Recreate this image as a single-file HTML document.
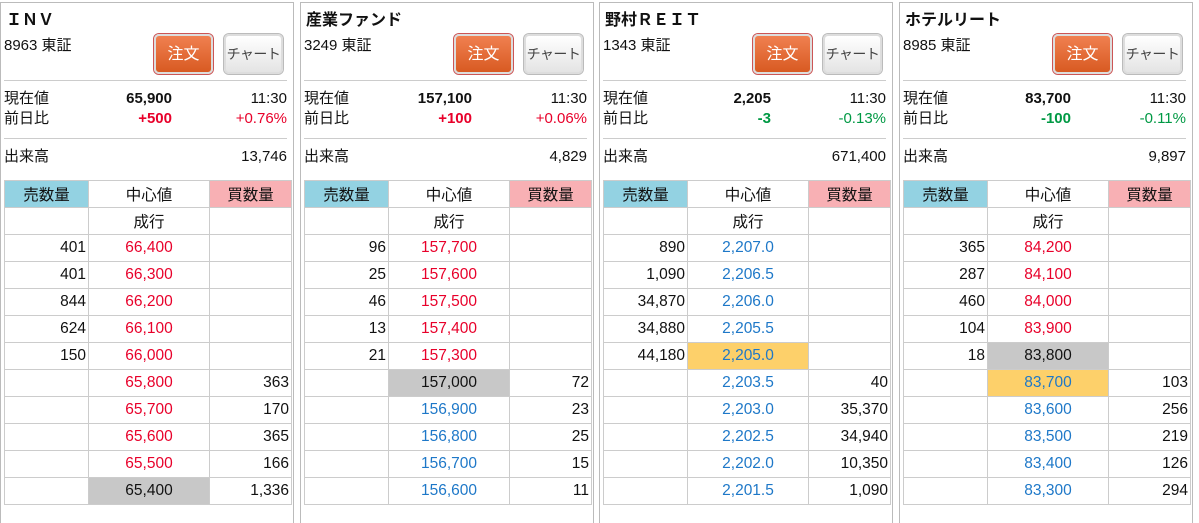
<!DOCTYPE html><html><head><meta charset="utf-8"><style>
body{margin:0;width:1199px;height:508px;overflow:hidden;background:#fff;font-family:"Liberation Sans","Noto Sans CJK JP",sans-serif;font-size:15px;color:#111}
.p{position:absolute;top:2px;width:292px;height:520px;border:1px solid #bbb;border-bottom:none}
.a{position:absolute;white-space:nowrap;line-height:20px}
.t{left:5px;top:8px;font-weight:bold;font-size:16px}
.btn{position:absolute;top:31px;width:59px;height:40px;border-radius:5px;box-sizing:border-box;text-align:center;line-height:37px;font-size:16px}
.o{left:153px;background:linear-gradient(#f08050,#d85a22);color:#fff;border:2px solid #ddd;box-shadow:0 0 0 1px #c55}
.g{left:223px;background:linear-gradient(#fff,#e4e4e4);color:#444;border:2px solid #ddd;box-shadow:0 0 0 1px #bbb;font-size:14px;letter-spacing:-0.5px}
.hr{position:absolute;left:3px;width:283px;height:1px;background:#ccc}
table{position:absolute;left:3px;top:177px;border-collapse:collapse;width:288px}
td{border:1px solid #ccc;height:26px;padding:0 2px;text-align:right;font-size:15.5px}
td.c{text-align:center;width:116px}
td.l{width:79px}
.r{color:#e8002a}.b{color:#1e78c8}.gr{color:#009944}
.hs{background:#93d2e2;text-align:center}.hb{background:#f8b0b4;text-align:center}
.gy{background:#c8c8c8}.yl{background:#fdd06a}
.l1{top:86px}.l2{top:106px}.l3{top:144px}
.v{right:121px;font-weight:bold}.tm{right:6px}.lb{left:3px}
</style></head><body>

<div class="p" style="left:0">
<div class="a t">ＩＮＶ</div><div class="a lb" style="top:33px">8963 東証</div>
<div class="btn o">注文</div><div class="btn g">チャート</div>
<div class="hr" style="top:77px"></div>
<div class="a lb l1">現在値</div><div class="a v l1">65,900</div><div class="a tm l1">11:30</div>
<div class="a lb l2">前日比</div><div class="a v r l2">+500</div><div class="a tm r l2">+0.76%</div>
<div class="hr" style="top:135px"></div>
<div class="a lb l3">出来高</div><div class="a tm l3">13,746</div>
<table>
<tr><td class="hs l">売数量</td><td class="c">中心値</td><td class="hb">買数量</td></tr>
<tr><td></td><td class="c">成行</td><td></td></tr>
<tr><td>401</td><td class="c r">66,400</td><td></td></tr>
<tr><td>401</td><td class="c r">66,300</td><td></td></tr>
<tr><td>844</td><td class="c r">66,200</td><td></td></tr>
<tr><td>624</td><td class="c r">66,100</td><td></td></tr>
<tr><td>150</td><td class="c r">66,000</td><td></td></tr>
<tr><td></td><td class="c r">65,800</td><td>363</td></tr>
<tr><td></td><td class="c r">65,700</td><td>170</td></tr>
<tr><td></td><td class="c r">65,600</td><td>365</td></tr>
<tr><td></td><td class="c r">65,500</td><td>166</td></tr>
<tr><td></td><td class="c gy">65,400</td><td>1,336</td></tr>
</table></div>

<div class="p" style="left:300px">
<div class="a t">産業ファンド</div><div class="a lb" style="top:33px">3249 東証</div>
<div class="btn o">注文</div><div class="btn g">チャート</div>
<div class="hr" style="top:77px"></div>
<div class="a lb l1">現在値</div><div class="a v l1">157,100</div><div class="a tm l1">11:30</div>
<div class="a lb l2">前日比</div><div class="a v r l2">+100</div><div class="a tm r l2">+0.06%</div>
<div class="hr" style="top:135px"></div>
<div class="a lb l3">出来高</div><div class="a tm l3">4,829</div>
<table>
<tr><td class="hs l">売数量</td><td class="c">中心値</td><td class="hb">買数量</td></tr>
<tr><td></td><td class="c">成行</td><td></td></tr>
<tr><td>96</td><td class="c r">157,700</td><td></td></tr>
<tr><td>25</td><td class="c r">157,600</td><td></td></tr>
<tr><td>46</td><td class="c r">157,500</td><td></td></tr>
<tr><td>13</td><td class="c r">157,400</td><td></td></tr>
<tr><td>21</td><td class="c r">157,300</td><td></td></tr>
<tr><td></td><td class="c gy">157,000</td><td>72</td></tr>
<tr><td></td><td class="c b">156,900</td><td>23</td></tr>
<tr><td></td><td class="c b">156,800</td><td>25</td></tr>
<tr><td></td><td class="c b">156,700</td><td>15</td></tr>
<tr><td></td><td class="c b">156,600</td><td>11</td></tr>
</table></div>

<div class="p" style="left:599px">
<div class="a t">野村ＲＥＩＴ</div><div class="a lb" style="top:33px">1343 東証</div>
<div class="btn o">注文</div><div class="btn g">チャート</div>
<div class="hr" style="top:77px"></div>
<div class="a lb l1">現在値</div><div class="a v l1">2,205</div><div class="a tm l1">11:30</div>
<div class="a lb l2">前日比</div><div class="a v gr l2">-3</div><div class="a tm gr l2">-0.13%</div>
<div class="hr" style="top:135px"></div>
<div class="a lb l3">出来高</div><div class="a tm l3">671,400</div>
<table>
<tr><td class="hs l">売数量</td><td class="c">中心値</td><td class="hb">買数量</td></tr>
<tr><td></td><td class="c">成行</td><td></td></tr>
<tr><td>890</td><td class="c b">2,207.0</td><td></td></tr>
<tr><td>1,090</td><td class="c b">2,206.5</td><td></td></tr>
<tr><td>34,870</td><td class="c b">2,206.0</td><td></td></tr>
<tr><td>34,880</td><td class="c b">2,205.5</td><td></td></tr>
<tr><td>44,180</td><td class="c b yl">2,205.0</td><td></td></tr>
<tr><td></td><td class="c b">2,203.5</td><td>40</td></tr>
<tr><td></td><td class="c b">2,203.0</td><td>35,370</td></tr>
<tr><td></td><td class="c b">2,202.5</td><td>34,940</td></tr>
<tr><td></td><td class="c b">2,202.0</td><td>10,350</td></tr>
<tr><td></td><td class="c b">2,201.5</td><td>1,090</td></tr>
</table></div>

<div class="p" style="left:899px">
<div class="a t">ホテルリート</div><div class="a lb" style="top:33px">8985 東証</div>
<div class="btn o">注文</div><div class="btn g">チャート</div>
<div class="hr" style="top:77px"></div>
<div class="a lb l1">現在値</div><div class="a v l1">83,700</div><div class="a tm l1">11:30</div>
<div class="a lb l2">前日比</div><div class="a v gr l2">-100</div><div class="a tm gr l2">-0.11%</div>
<div class="hr" style="top:135px"></div>
<div class="a lb l3">出来高</div><div class="a tm l3">9,897</div>
<table>
<tr><td class="hs l">売数量</td><td class="c">中心値</td><td class="hb">買数量</td></tr>
<tr><td></td><td class="c">成行</td><td></td></tr>
<tr><td>365</td><td class="c r">84,200</td><td></td></tr>
<tr><td>287</td><td class="c r">84,100</td><td></td></tr>
<tr><td>460</td><td class="c r">84,000</td><td></td></tr>
<tr><td>104</td><td class="c r">83,900</td><td></td></tr>
<tr><td>18</td><td class="c gy">83,800</td><td></td></tr>
<tr><td></td><td class="c b yl">83,700</td><td>103</td></tr>
<tr><td></td><td class="c b">83,600</td><td>256</td></tr>
<tr><td></td><td class="c b">83,500</td><td>219</td></tr>
<tr><td></td><td class="c b">83,400</td><td>126</td></tr>
<tr><td></td><td class="c b">83,300</td><td>294</td></tr>
</table></div>
</body></html>
